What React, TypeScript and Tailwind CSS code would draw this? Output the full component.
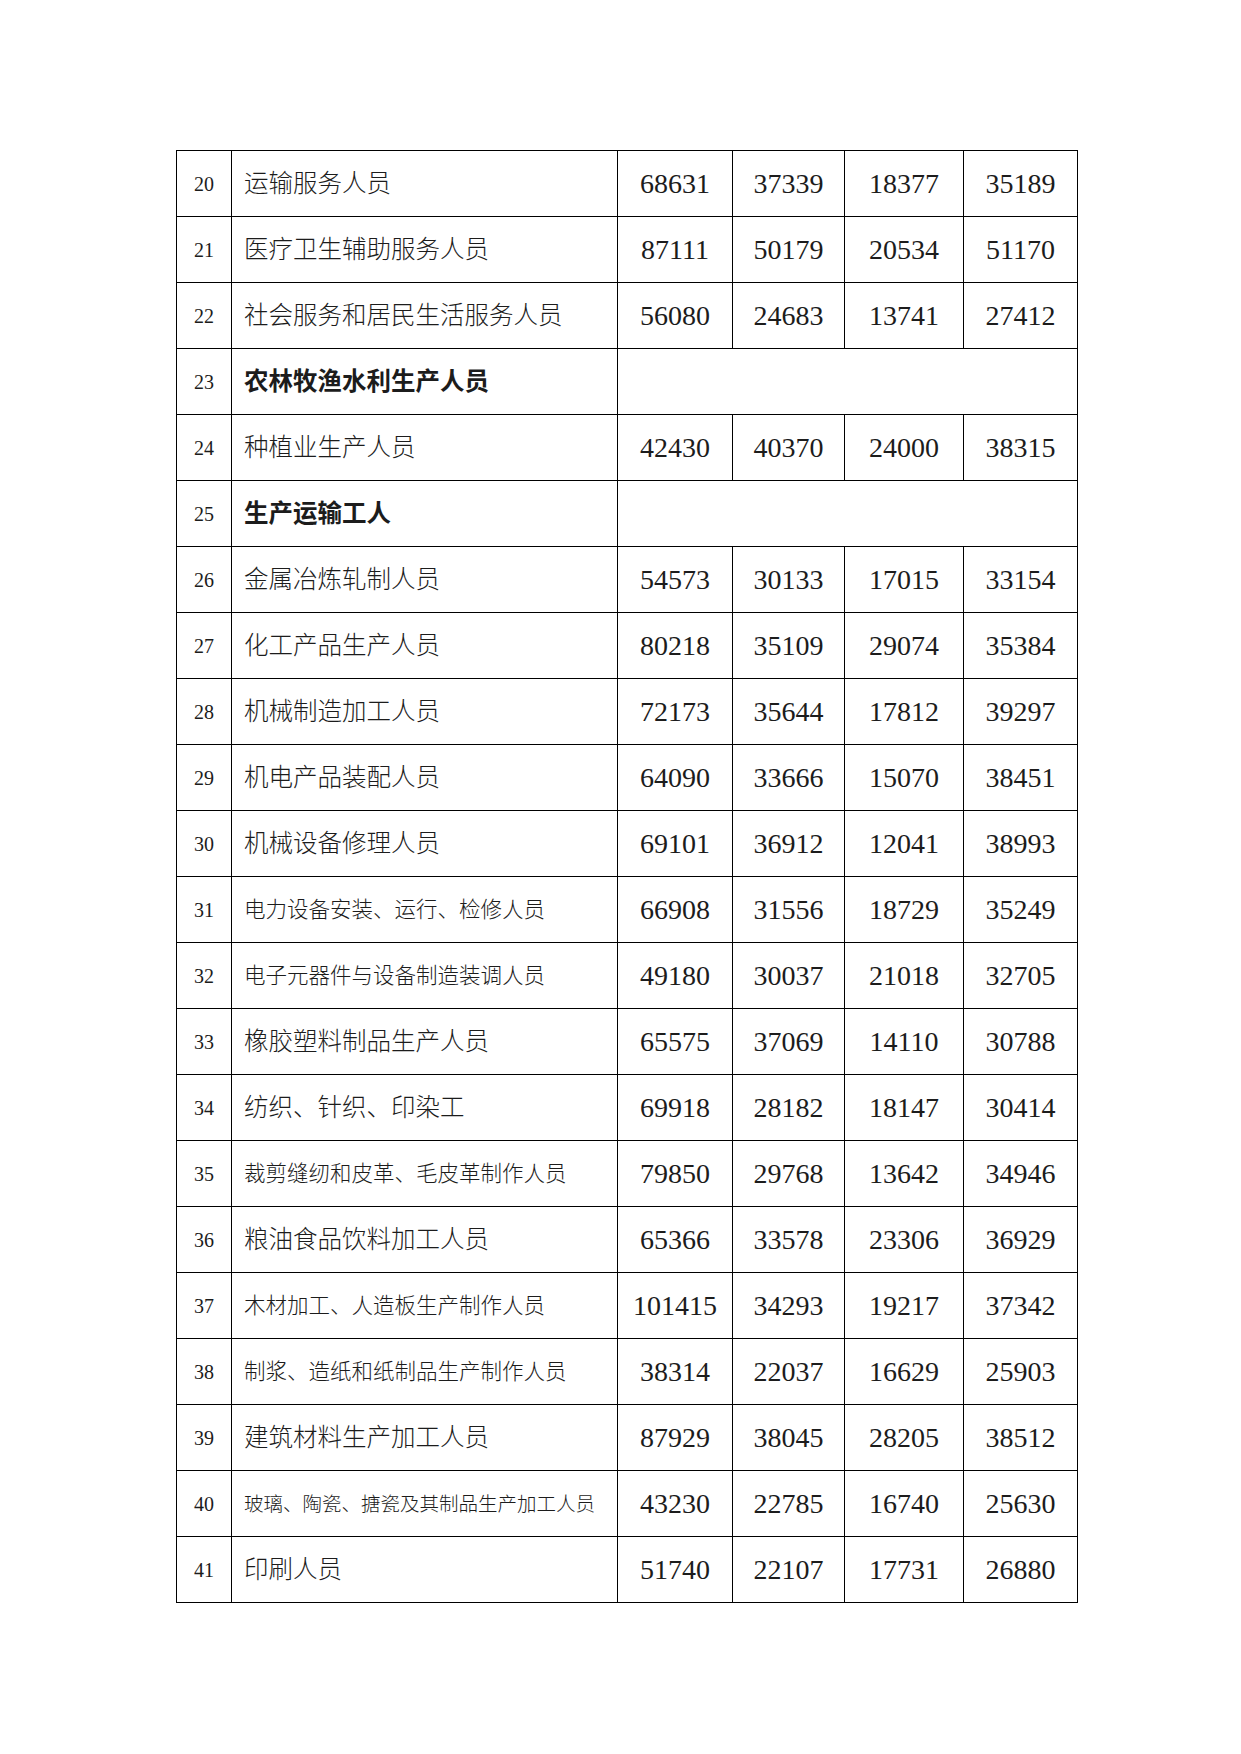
import React from "react";

type Row = {
  n: number;
  name: string;
  vals?: string[];
  size?: "n" | "s" | "xs";
  bold?: boolean;
};

const rows: Row[] = [
  { n: 20, name: "运输服务人员", vals: ["68631", "37339", "18377", "35189"] },
  { n: 21, name: "医疗卫生辅助服务人员", vals: ["87111", "50179", "20534", "51170"] },
  { n: 22, name: "社会服务和居民生活服务人员", vals: ["56080", "24683", "13741", "27412"] },
  { n: 23, name: "农林牧渔水利生产人员", bold: true },
  { n: 24, name: "种植业生产人员", vals: ["42430", "40370", "24000", "38315"] },
  { n: 25, name: "生产运输工人", bold: true },
  { n: 26, name: "金属冶炼轧制人员", vals: ["54573", "30133", "17015", "33154"] },
  { n: 27, name: "化工产品生产人员", vals: ["80218", "35109", "29074", "35384"] },
  { n: 28, name: "机械制造加工人员", vals: ["72173", "35644", "17812", "39297"] },
  { n: 29, name: "机电产品装配人员", vals: ["64090", "33666", "15070", "38451"] },
  { n: 30, name: "机械设备修理人员", vals: ["69101", "36912", "12041", "38993"] },
  { n: 31, name: "电力设备安装、运行、检修人员", vals: ["66908", "31556", "18729", "35249"], size: "s" },
  { n: 32, name: "电子元器件与设备制造装调人员", vals: ["49180", "30037", "21018", "32705"], size: "s" },
  { n: 33, name: "橡胶塑料制品生产人员", vals: ["65575", "37069", "14110", "30788"] },
  { n: 34, name: "纺织、针织、印染工", vals: ["69918", "28182", "18147", "30414"] },
  { n: 35, name: "裁剪缝纫和皮革、毛皮革制作人员", vals: ["79850", "29768", "13642", "34946"], size: "s" },
  { n: 36, name: "粮油食品饮料加工人员", vals: ["65366", "33578", "23306", "36929"] },
  { n: 37, name: "木材加工、人造板生产制作人员", vals: ["101415", "34293", "19217", "37342"], size: "s" },
  { n: 38, name: "制浆、造纸和纸制品生产制作人员", vals: ["38314", "22037", "16629", "25903"], size: "s" },
  { n: 39, name: "建筑材料生产加工人员", vals: ["87929", "38045", "28205", "38512"] },
  { n: 40, name: "玻璃、陶瓷、搪瓷及其制品生产加工人员", vals: ["43230", "22785", "16740", "25630"], size: "xs" },
  { n: 41, name: "印刷人员", vals: ["51740", "22107", "17731", "26880"] },
];

const serif = "font-['Liberation_Serif','Noto_Sans_CJK_SC',serif]";
const cjk = "font-['Liberation_Serif','Noto_Sans_CJK_SC',sans-serif]";

function nameSize(r: Row) {
  if (r.size === "s") return "text-[21.5px]";
  if (r.size === "xs") return "text-[19.5px]";
  return "text-[24.5px]";
}

export default function App() {
  return (
    <div className="w-[1241px] h-[1754px] bg-white pt-[150px] pl-[176px] text-[#1c1c1c]">
      <div className="grid w-[902px] grid-cols-[54px_385px_114px_111px_118px_113px] auto-rows-[65px] gap-px bg-black p-px">
        {rows.map((r) => (
          <React.Fragment key={r.n}>
            <div className={`bg-white flex items-center justify-center text-[20px] ${serif}`}>{r.n}</div>
            <div
              className={`bg-white flex items-center pl-[12px] pt-[2px] whitespace-nowrap ${nameSize(r)} ${cjk} ${
                r.bold ? "font-bold" : "font-light"
              }`}
            >
              {r.name}
            </div>
            {r.vals ? (
              r.vals.map((v, i) => (
                <div key={i} className={`bg-white flex items-center justify-center text-[28px] ${serif}`}>
                  {v}
                </div>
              ))
            ) : (
              <div className="bg-white col-span-4" />
            )}
          </React.Fragment>
        ))}
      </div>
    </div>
  );
}
